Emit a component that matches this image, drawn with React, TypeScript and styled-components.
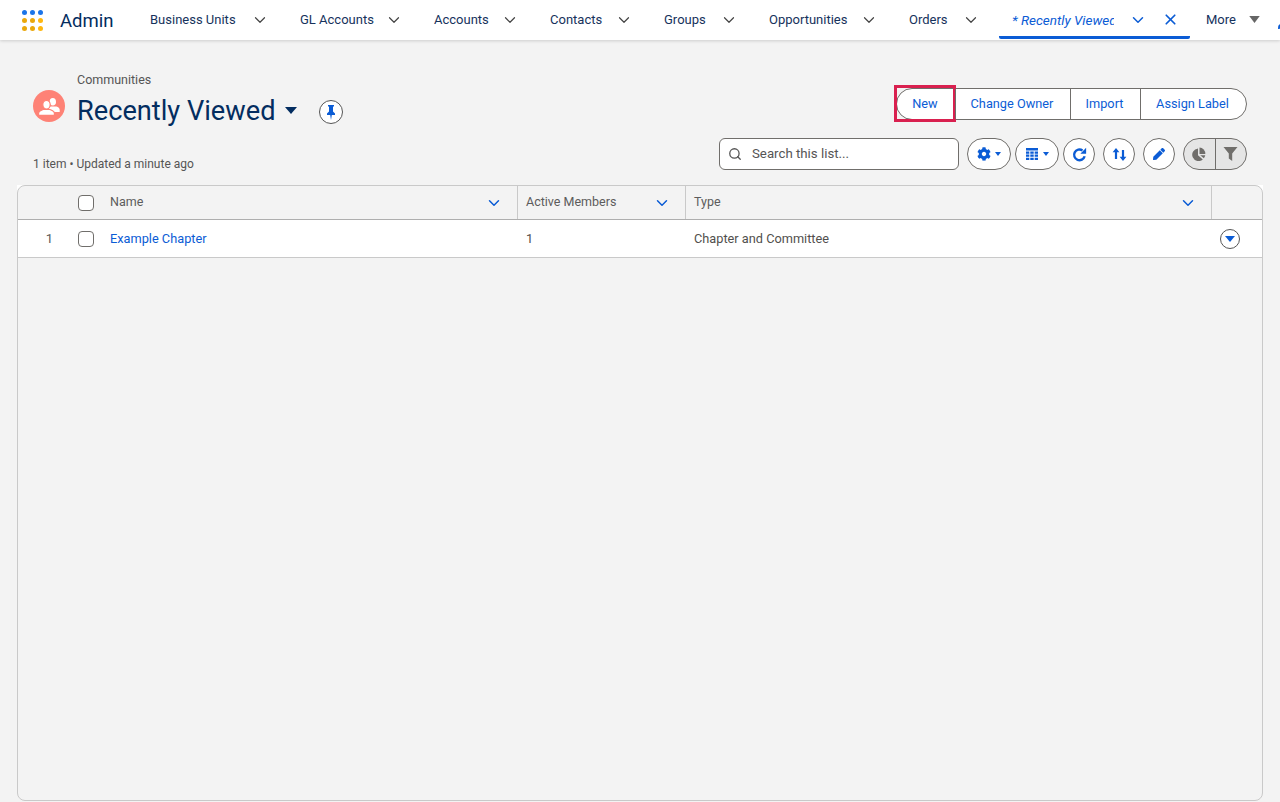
import * as React from 'react'
import styled, { createGlobalStyle } from 'styled-components'
import { FaCog, FaPen } from 'react-icons/fa'
import { ChevronDown, Search, X } from 'lucide-react'

const GlobalStyle = createGlobalStyle`
  html, body {
    margin: 0;
    padding: 0;
    height: 100%;
    overflow: hidden;
    background: #f3f3f3;
    font-family: Roboto, "Liberation Sans", sans-serif;
    font-size: 13px;
    color: #444;
  }
  #root {
    height: 100%;
  }
  * {
    box-sizing: border-box;
  }
`

const BLUE = '#0b5cd5'

const navItems = [
  { label: 'Business Units', width: 150, pad: 31 },
  { label: 'GL Accounts', width: 134, pad: 31 },
  { label: 'Accounts', width: 116, pad: 31 },
  { label: 'Contacts', width: 114, pad: 31 },
  { label: 'Groups', width: 105, pad: 31 },
  { label: 'Opportunities', width: 140, pad: 31 },
  { label: 'Orders', width: 90, pad: 19 },
]

const App: React.FC = () => (
  <Page>
    <GlobalStyle />
    <Header>
      <AppGrid>
        {['#1b74e8', '#1b74e8', '#1b74e8', '#eaa80c', '#eaa80c', '#ffb70f', '#eaa80c', '#eaa80c', '#ffb70f'].map((c, i) => (
          <Dot key={i} $color={c} />
        ))}
      </AppGrid>
      <AppName>Admin</AppName>
      <Nav>
        {navItems.map(item => (
          <NavItem key={item.label} $width={item.width} $pad={item.pad}>
            <span>{item.label}</span>
            <ChevronDown size={18} strokeWidth={1.6} color="#444" />
          </NavItem>
        ))}
        <ActiveTab>
          <ActiveLabel>* Recently Viewed | Communities</ActiveLabel>
          <ChevronDown size={18} strokeWidth={2} color={BLUE} />
          <CloseIcon size={17} strokeWidth={2.4} color={BLUE} />
        </ActiveTab>
        <More>
          More
          <MoreCaret viewBox="0 0 12 8">
            <path d="M0 0h12L6 8z" fill="#666" />
          </MoreCaret>
        </More>
        <EditNav size={12} color={BLUE} />
      </Nav>
    </Header>

    <Content>
      <Head>
        <TitleBlock>
          <Breadcrumb>Communities</Breadcrumb>
          <TitleRow>
            <Badge>
              <svg width="22" height="18" viewBox="0 0 22 18" fill="#fff">
                <ellipse cx="14.800" cy="4.800" rx="3.200" ry="3.800" />
                <path d="M11 9.500h7.500c1.800.8 3.200 1.600 3.200 3.200V15H11z" />
                <g stroke="#fe8276" strokeWidth="1.200">
                  <ellipse cx="8.500" cy="7.800" rx="3.700" ry="4.300" />
                  <path d="M.6 18.400v-2.400c0-1.800 2.500-2.500 4.500-3.500h6.800c2 1 4.500 1.700 4.500 3.500v2.400z" />
                </g>
              </svg>
            </Badge>
            <Title>Recently Viewed</Title>
            <TitleCaret viewBox="0 0 12 7">
              <path d="M0 0h12L6 7z" fill="#032d60" />
            </TitleCaret>
            <PinButton>
              <svg width="10" height="15" viewBox="0 0 10 15" fill={BLUE}>
                <path d="M2 0h6v1.500H7v5l2 2v1.500H5.800L5 15l-.8-5H1V8.500l2-2v-5H2z" />
              </svg>
            </PinButton>
          </TitleRow>
          <Meta>1 item • Updated a minute ago</Meta>
        </TitleBlock>

        <Controls>
          <ActionGroup>
            <ActionButton $width={58}>
              New
              <Highlight />
            </ActionButton>
            <ActionButton $width={115}>Change Owner</ActionButton>
            <ActionButton $width={70}>Import</ActionButton>
            <ActionButton $width={106}>Assign Label</ActionButton>
          </ActionGroup>
          <ToolRow>
            <SearchBox>
              <Search size={14} strokeWidth={2.2} color="#555" />
              <SearchInput placeholder="Search this list..." readOnly />
            </SearchBox>
            <PillButton>
              <FaCog size={14} color={BLUE} />
              <SmallCaret />
            </PillButton>
            <PillButton>
              <svg width="14" height="14" viewBox="0 0 14 14" fill={BLUE}>
                <path d="M1 1h12v2.500H1zM1 4.500h3.300v2.200H1zM5.300 4.500h3.400v2.200H5.300zM9.700 4.500H13v2.200H9.700zM1 7.600h3.300v2.200H1zM5.300 7.600h3.400v2.200H5.300zM9.700 7.600H13v2.200H9.700zM1 10.700h3.300V13H1zM5.300 10.700h3.400V13H5.300zM9.700 10.700H13V13H9.700z" />
              </svg>
              <SmallCaret />
            </PillButton>
            <RoundButton>
              <svg width="15" height="15" viewBox="0 0 14 14" fill="none">
                <path d="M11.800 8.600A5 5 0 1 1 9.800 3.200" stroke={BLUE} strokeWidth="2.200" />
                <path d="M7.800 6.200h5.400V.8z" fill={BLUE} />
              </svg>
            </RoundButton>
            <RoundButton>
              <svg width="15" height="15" viewBox="0 0 15 15" fill={BLUE}>
                <path d="M4 1 .6 5.200h2.300V12h2.200V5.200h2.300zM11 14l3.400-4.200h-2.300V3H9.900v6.800H7.600z" />
              </svg>
            </RoundButton>
            <RoundButton>
              <FaPen size={12} color={BLUE} />
            </RoundButton>
            <Toggle>
              <ToggleCell>
                <svg width="14" height="14" viewBox="0 0 14 14" fill="#706e6b">
                  <path d="M6 1.500v6.800l4.800 4.100A6.300 6.300 0 1 1 6 1.500z" />
                  <path d="M7.500 0.500A6.300 6.300 0 0 1 13.300 7H7.500z" />
                  <path d="M8.200 8.200h5.100a6 6 0 0 1-1.500 3z" />
                </svg>
              </ToggleCell>
              <ToggleCell>
                <svg width="15" height="14" viewBox="0 0 15 14" fill="#706e6b">
                  <path d="M.5 0h14L9.200 6.500V14l-3.400-2.600V6.500z" />
                </svg>
              </ToggleCell>
            </Toggle>
          </ToolRow>
        </Controls>
      </Head>

      <TableFrame>
        <Table>
          <HeadRow>
            <Cell />
            <Cell>
              <Checkbox />
            </Cell>
            <ColumnTitle text="Name" />
            <ColumnTitle text="Active Members" />
            <ColumnTitle text="Type" />
            <Cell />
          </HeadRow>
          <BodyRow>
            <RowNumber>1</RowNumber>
            <Cell>
              <Checkbox />
            </Cell>
            <TextCell>
              <RecordLink>Example Chapter</RecordLink>
            </TextCell>
            <TextCell>1</TextCell>
            <TextCell>Chapter and Committee</TextCell>
            <ActionCell>
              <RowMenu>
                <svg width="10" height="6" viewBox="0 0 10 6">
                  <path d="M0 0h10L5 6z" fill={BLUE} />
                </svg>
              </RowMenu>
            </ActionCell>
          </BodyRow>
        </Table>
      </TableFrame>
    </Content>
  </Page>
)

const ColumnTitle: React.FC<{ text: string }> = ({ text }) => (
  <ColumnHead>
    <ColumnLabel>{text}</ColumnLabel>
    <ChevronDown size={18} strokeWidth={2} color={BLUE} />
  </ColumnHead>
)

const Page = styled.div`
  display: flex;
  flex-direction: column;
  height: 802px;
`
const Header = styled.header`
  display: flex;
  align-items: center;
  flex: none;
  height: 40px;
  padding-left: 22px;
  background: #fff;
  box-shadow: 0 1px 3px rgba(0, 0, 0, 0.16);
  overflow: hidden;
`
const AppGrid = styled.div`
  display: grid;
  grid-template-columns: repeat(3, 5px);
  gap: 3px;
  flex: none;
  width: 21px;
`
const Dot = styled.i<{ $color: string }>`
  display: block;
  width: 5px;
  height: 5px;
  border-radius: 50%;
  background: ${p => p.$color};
`
const AppName = styled.div`
  flex: none;
  width: 90px;
  margin-left: 17px;
  padding-top: 1px;
  font-size: 18.5px;
  color: #032d60;
`
const Nav = styled.nav`
  display: flex;
  align-items: center;
  height: 100%;
  flex: none;
`
const NavItem = styled.div<{ $width: number; $pad: number }>`
  display: flex;
  align-items: center;
  justify-content: space-between;
  width: ${p => p.$width}px;
  padding-right: ${p => p.$pad}px;
  padding-bottom: 1px;
  font-size: 13px;
  color: #16325c;
  white-space: nowrap;
`
const ActiveTab = styled.div`
  display: flex;
  align-items: center;
  align-self: flex-start;
  flex: none;
  width: 191px;
  height: 39px;
  padding: 3px 11px 0 13px;
  border-bottom: 3px solid ${BLUE};
  border-radius: 0 0 2px 2px;
`
const ActiveLabel = styled.span`
  flex: none;
  width: 102px;
  margin-right: 15px;
  overflow: hidden;
  white-space: nowrap;
  font-size: 13.5px;
  font-style: italic;
  color: ${BLUE};
`
const CloseIcon = styled(X)`
  margin-left: 15px;
`
const More = styled.div`
  display: flex;
  align-items: center;
  flex: none;
  gap: 13px;
  margin-left: 16px;
  padding-bottom: 1px;
  font-size: 13px;
  color: #16325c;
`
const MoreCaret = styled.svg`
  width: 11px;
  height: 7px;
`
const EditNav = styled(FaPen)`
  flex: none;
  margin: 6px 0 0 18px;
`
const Content = styled.main`
  display: flex;
  flex: 1;
  flex-direction: column;
  min-height: 0;
  padding: 0 17px 1px;
`
const Head = styled.section`
  display: flex;
  flex: none;
  justify-content: space-between;
  height: 145px;
  padding: 33px 16px 0;
`
const TitleBlock = styled.div`
  display: flex;
  flex-direction: column;
`
const Breadcrumb = styled.div`
  margin-left: 44px;
  font-size: 12.5px;
  line-height: 14px;
  color: #555;
`
const TitleRow = styled.div`
  display: flex;
  align-items: center;
  height: 34px;
  margin-top: 7px;
`
const Badge = styled.div`
  display: flex;
  align-items: center;
  justify-content: center;
  align-self: flex-start;
  width: 32px;
  height: 32px;
  margin: -4px 12px 0 0;
  border-radius: 50%;
  background: #fe8276;
`
const Title = styled.h1`
  margin: 0;
  font-size: 27.2px;
  font-weight: 400;
  line-height: 34px;
  color: #032d60;
`
const TitleCaret = styled.svg`
  width: 12px;
  height: 7px;
  margin: -1px 0 0 10px;
`
const PinButton = styled.div`
  display: flex;
  align-items: center;
  justify-content: center;
  width: 24px;
  height: 24px;
  margin: 2px 0 0 22px;
  border: 1px solid #555;
  border-radius: 50%;
  background: #fff;
`
const Meta = styled.div`
  margin-top: 29px;
  font-size: 12px;
  line-height: 14px;
  color: #555;
`
const Controls = styled.div`
  display: flex;
  flex-direction: column;
  align-items: flex-end;
  gap: 18px;
  padding-top: 15px;
`
const ActionGroup = styled.div`
  display: flex;
  height: 32px;
  border: 1px solid #706e6b;
  border-radius: 16px;
  background: #fff;
`
const ActionButton = styled.div<{ $width: number }>`
  position: relative;
  display: flex;
  align-items: center;
  justify-content: center;
  width: ${p => p.$width}px;
  padding: 0 2px 1px 0;
  font-size: 12.75px;
  color: ${BLUE};
  & + & {
    border-left: 1px solid #706e6b;
  }
`
const Highlight = styled.span`
  position: absolute;
  top: -4px;
  right: -1px;
  bottom: -3px;
  left: -3px;
  border: 3px solid #d9204f;
`
const ToolRow = styled.div`
  display: flex;
  align-items: center;
  gap: 4px;
`
const SearchBox = styled.div`
  display: flex;
  align-items: center;
  gap: 10px;
  width: 240px;
  height: 32px;
  margin-right: 4px;
  padding: 0 0 1px 8px;
  border: 1px solid #706e6b;
  border-radius: 6px;
  background: #fff;
`
const SearchInput = styled.input`
  flex: 1;
  min-width: 0;
  border: 0;
  outline: 0;
  padding: 0;
  background: transparent;
  font: inherit;
  font-size: 13.25px;
  &::placeholder {
    color: #555;
    opacity: 1;
  }
`
const PillButton = styled.div`
  display: flex;
  align-items: center;
  justify-content: center;
  gap: 4px;
  width: 44px;
  height: 32px;
  border: 1px solid #706e6b;
  border-radius: 16px;
  background: #fff;
`
const SmallCaret = styled.span`
  width: 0;
  height: 0;
  border-top: 4px solid ${BLUE};
  border-right: 3.5px solid transparent;
  border-left: 3.5px solid transparent;
`
const RoundButton = styled.div`
  display: flex;
  align-items: center;
  justify-content: center;
  width: 32px;
  height: 32px;
  border: 1px solid #706e6b;
  border-radius: 50%;
  background: #fff;
  & + & {
    margin-left: 4px;
  }
`
const Toggle = styled.div`
  display: flex;
  width: 64px;
  height: 32px;
  margin-left: 4px;
  border: 1px solid #706e6b;
  border-radius: 16px;
  background: #e5e5e5;
  overflow: hidden;
`
const ToggleCell = styled.div`
  display: flex;
  flex: 1;
  align-items: center;
  justify-content: center;
  & + & {
    border-left: 1px solid #706e6b;
  }
`
const TableFrame = styled.div`
  flex: 1;
  display: flex;
  min-height: 0;
  background: linear-gradient(#fff 8px, transparent 8px);
`
const Table = styled.section`
  flex: 1;
  min-width: 0;
  border: 1px solid #c9c9c9;
  border-radius: 8px;
  background: #f3f3f3;
  overflow: hidden;
`
const gridColumns = '50px 34px 416px 168px 526px 1fr'
const HeadRow = styled.div`
  display: grid;
  grid-template-columns: ${gridColumns};
  height: 34px;
  border-bottom: 1px solid #aeaeae;
`
const BodyRow = styled.div`
  display: grid;
  grid-template-columns: ${gridColumns};
  height: 38px;
  border-bottom: 1px solid #c9c9c9;
  background: #fff;
`
const Cell = styled.div`
  display: flex;
  align-items: center;
  min-width: 0;
`
const ColumnHead = styled(Cell)`
  justify-content: space-between;
  padding: 0 14px 0 8px;
  border-right: 1px solid #c9c9c9;
  font-size: 12.5px;
  color: #5c5c5c;
`
const ColumnLabel = styled.span`
  padding-bottom: 2px;
`
const RowNumber = styled(Cell)`
  justify-content: flex-end;
  padding-right: 15px;
  color: #5c5c5c;
`
const TextCell = styled(Cell)`
  padding-left: 8px;
  font-size: 12.75px;
  color: #514f4d;
`
const RecordLink = styled.a`
  color: ${BLUE};
`
const ActionCell = styled(Cell)`
  padding-left: 8px;
`
const Checkbox = styled.span`
  display: block;
  width: 16px;
  height: 16px;
  margin-left: 10px;
  border: 1px solid #706e6b;
  border-radius: 4px;
  background: #fff;
`
const RowMenu = styled.div`
  display: flex;
  align-items: center;
  justify-content: center;
  width: 20px;
  height: 20px;
  border: 1px solid #555;
  border-radius: 50%;
`

export default App
